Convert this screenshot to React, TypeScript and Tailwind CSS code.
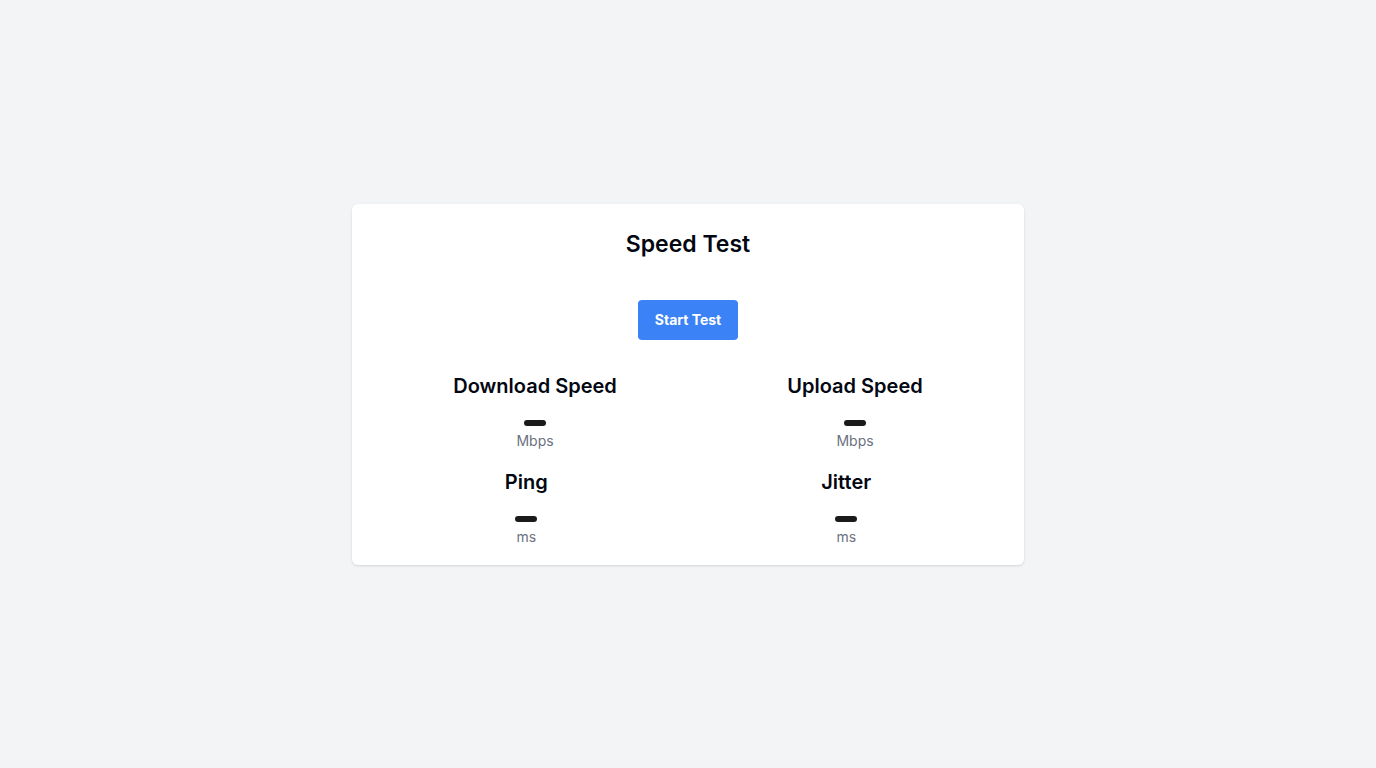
import React from 'react'

type Stat = { label: string; unit: string }

const rows: Stat[][] = [
  [
    { label: 'Download Speed', unit: 'Mbps' },
    { label: 'Upload Speed', unit: 'Mbps' },
  ],
  [
    { label: 'Ping', unit: 'ms' },
    { label: 'Jitter', unit: 'ms' },
  ],
]

function StatItem({ stat }: { stat: Stat }) {
  return (
    <div className="flex flex-col items-center">
      <h2 className="text-xl font-semibold text-gray-950">{stat.label}</h2>
      <div className="mt-[20px] h-[6px] w-[22px] rounded-full bg-[#1a1a1a]" />
      <span className="mt-[3px] text-[14px] leading-6 text-[#6b7280]">{stat.unit}</span>
    </div>
  )
}

function App() {
  return (
    <div
      className="min-h-screen bg-gray-100 flex items-center justify-center"
      style={{ fontFamily: 'Inter, "Noto Sans", sans-serif' }}
    >
      <div className="w-full max-w-2xl bg-white rounded-md shadow p-4">
        <h1 className="mt-[8px] text-[23px] leading-8 font-semibold text-gray-950 text-center">Speed Test</h1>
        <div className="mt-[40px] flex justify-center">
          <button
            type="button"
            className="px-[17px] py-2.5 rounded bg-[#3b82f6] text-white text-sm font-bold"
          >
            Start Test
          </button>
        </div>
        <div className="mt-8 flex flex-col gap-[15px]">
          {rows.map((row, i) => (
            <div key={i} className="flex justify-around">
              {row.map((s) => (
                <StatItem key={s.label} stat={s} />
              ))}
            </div>
          ))}
        </div>
      </div>
    </div>
  )
}

export default App
